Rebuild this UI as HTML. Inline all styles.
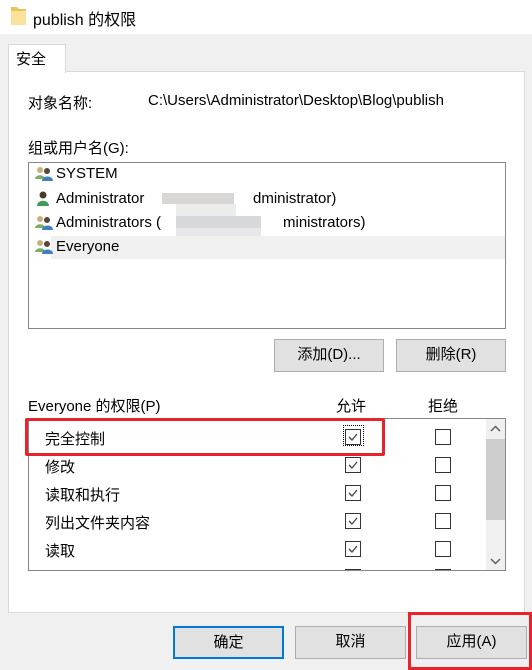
<!DOCTYPE html>
<html><head><meta charset="utf-8"><style>
body{margin:0;width:532px;height:670px;background:#f0f0f0;position:relative;overflow:hidden;font-family:"Liberation Sans","Noto Sans CJK SC",sans-serif;font-size:15px;color:#000}
.a{position:absolute;white-space:nowrap}
.btn{position:absolute;background:#e1e1e1;border:1px solid #adadad;box-sizing:border-box;text-align:center;line-height:30px;font-size:15px}
.cb{position:absolute;width:16px;height:16px;border:1px solid #333;box-sizing:border-box;background:#fff}
.cb svg{position:absolute;left:2px;top:2px}
.row{position:absolute;left:45px}
</style></head><body>
<div class="a" style="left:0;top:0;width:532px;height:34px;background:#fff"></div>
<svg class="a" style="left:10px;top:5px" width="18" height="22"><path d="M1 2h6l2 2h7v16H1z" fill="#e9c25a"/><path d="M1 6h15v14H1z" fill="#fbe29a"/></svg>
<div class="a" style="left:33px;top:6px;font-size:16px">publish 的权限</div>
<div class="a" style="left:8px;top:71px;width:517px;height:542px;background:#fff;border:1px solid #d9d9d9;box-sizing:border-box"></div>
<div class="a" style="left:8px;top:44px;width:58px;height:29px;background:#fff;border:1px solid #d9d9d9;border-bottom:none;box-sizing:border-box"></div>
<div class="a" style="left:16px;top:48px">安全</div>
<div class="a" style="left:28px;top:92px">对象名称:</div>
<div class="a" style="left:148px;top:92px">C:\Users\Administrator\Desktop\Blog\publish</div>
<div class="a" style="left:28px;top:137px">组或用户名(G):</div>
<div class="a" style="left:28px;top:162px;width:478px;height:167px;border:1px solid #828790;box-sizing:border-box"></div>
<div class="a" style="left:51px;top:236px;width:454px;height:23px;background:#f0f0f0"></div>
<svg class="a" style="left:35px;top:166px" width="18" height="100">
<g id="g"><circle cx="5" cy="4" r="3" fill="#c9b27a"/><path d="M0 13c0-5 10-5 10 0z" fill="#7fae6a"/><circle cx="12" cy="5" r="3" fill="#5a4632"/><path d="M7 15c0-6 11-6 11 0z" fill="#3f7fc1"/></g>
<g transform="translate(0,25)"><circle cx="8" cy="4" r="3.5" fill="#4a3a2a"/><path d="M2 15c0-7 12-7 12 0z" fill="#3c9a5a"/></g>
<use href="#g" y="49"/><use href="#g" y="73"/></svg>
<div class="a" style="left:56px;top:165px;line-height:18px">SYSTEM</div>
<div class="a" style="left:56px;top:190px;line-height:18px">Administrator</div>
<div class="a" style="left:253px;top:190px;line-height:18px">dministrator)</div>
<div class="a" style="left:56px;top:214px;line-height:18px">Administrators (</div>
<div class="a" style="left:283px;top:214px;line-height:18px">ministrators)</div>
<div class="a" style="left:56px;top:238px;line-height:18px">Everyone</div>
<div class="a" style="left:162px;top:193px;width:72px;height:11px;background:#c8c6c4;opacity:.7"></div>
<div class="a" style="left:176px;top:204px;width:60px;height:12px;background:#ececec"></div>
<div class="a" style="left:176px;top:216px;width:85px;height:12px;background:#c6c8cc;opacity:.7"></div>
<div class="a" style="left:176px;top:228px;width:85px;height:8px;background:#e8e8e8"></div>
<div class="btn" style="left:274px;top:339px;width:110px;height:33px">添加(D)...</div>
<div class="btn" style="left:396px;top:339px;width:110px;height:33px">删除(R)</div>
<div class="a" style="left:28px;top:395px">Everyone 的权限(P)</div>
<div class="a" style="left:336px;top:395px">允许</div>
<div class="a" style="left:428px;top:395px">拒绝</div>
<div class="a" style="left:28px;top:418px;width:478px;height:153px;border:1px solid #828790;box-sizing:border-box;overflow:hidden">
<div class="a" style="left:457px;top:0;width:19px;height:151px;background:#f0f0f0"></div>
<div class="a" style="left:457px;top:20px;width:19px;height:81px;background:#cdcdcd"></div>
<svg class="a" style="left:461px;top:6px" width="11" height="8"><path d="M1 6l4.5-4.5L10 6" stroke="#606060" stroke-width="1.5" fill="none"/></svg>
<svg class="a" style="left:461px;top:138px" width="11" height="8"><path d="M1 2l4.5 4.5L10 2" stroke="#606060" stroke-width="1.5" fill="none"/></svg>
</div>
<div class="row a" style="top:428px">完全控制</div>
<div class="row a" style="top:456px">修改</div>
<div class="row a" style="top:484px">读取和执行</div>
<div class="row a" style="top:512px">列出文件夹内容</div>
<div class="row a" style="top:540px">读取</div>
<div class="a" style="left:343px;top:425px;width:21px;height:21px;border:1px dotted #000;box-sizing:border-box"></div>
<div class="cb" style="left:345px;top:429px"><svg width="10" height="10"><path d="M1 5l3 3 5-6" stroke="#444" stroke-width="1.3" fill="none"/></svg></div>
<div class="cb" style="left:345px;top:457px"><svg width="10" height="10"><path d="M1 5l3 3 5-6" stroke="#444" stroke-width="1.3" fill="none"/></svg></div>
<div class="cb" style="left:345px;top:485px"><svg width="10" height="10"><path d="M1 5l3 3 5-6" stroke="#444" stroke-width="1.3" fill="none"/></svg></div>
<div class="cb" style="left:345px;top:513px"><svg width="10" height="10"><path d="M1 5l3 3 5-6" stroke="#444" stroke-width="1.3" fill="none"/></svg></div>
<div class="cb" style="left:345px;top:541px"><svg width="10" height="10"><path d="M1 5l3 3 5-6" stroke="#444" stroke-width="1.3" fill="none"/></svg></div>
<div class="cb" style="left:435px;top:429px"></div>
<div class="cb" style="left:435px;top:457px"></div>
<div class="cb" style="left:435px;top:485px"></div>
<div class="cb" style="left:435px;top:513px"></div>
<div class="cb" style="left:435px;top:541px"></div>
<div class="a" style="left:345px;top:569px;width:16px;height:1px;background:#333"></div>
<div class="a" style="left:435px;top:569px;width:16px;height:1px;background:#333"></div>
<div class="a" style="left:25px;top:418px;width:360px;height:38px;border:3px solid #e8232c;box-sizing:border-box;border-radius:2px"></div>
<div class="btn" style="left:173px;top:626px;width:111px;height:33px;border:2px solid #0078d7;line-height:29px">确定</div>
<div class="btn" style="left:295px;top:626px;width:111px;height:33px">取消</div>
<div class="btn" style="left:416px;top:626px;width:111px;height:33px">应用(A)</div>
<div class="a" style="left:408px;top:612px;width:124px;height:58px;border:3px solid #e8232c;box-sizing:border-box"></div>
</body></html>
